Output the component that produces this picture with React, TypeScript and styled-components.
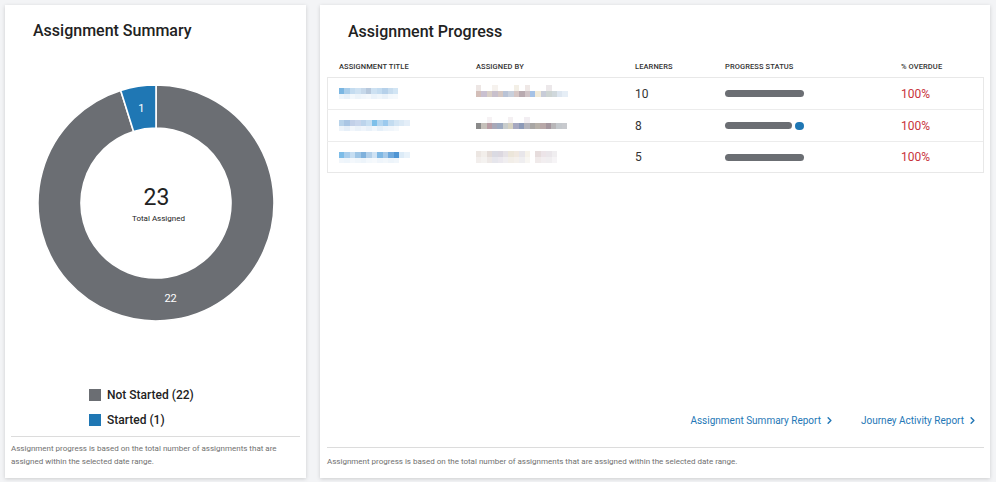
import React from "react";
import styled, { createGlobalStyle } from "styled-components";
import { ChevronRight } from "lucide-react";

const GlobalStyle = createGlobalStyle`
  html, body { margin: 0; padding: 0; background: #f3f4f6; }
  body { font-family: Roboto, "Liberation Sans", Arial, sans-serif; color: #222; }
  * { box-sizing: border-box; }
`;

const GREY = "#6b6e73";
const BLUE = "#1f77b4";
const LINK = "#2477b6";
const RED = "#c8333b";

const Page = styled.div`
  display: flex;
  gap: 14px;
  height: 482px;
  padding: 5px 6px 4px 5px;
`;

const Card = styled.section<{ $width?: number }>`
  background: #fff;
  box-shadow: 0 1px 4px rgba(0, 0, 0, 0.16);
  display: flex;
  flex-direction: column;
  ${(p) => (p.$width ? `width: ${p.$width}px; flex: none;` : "flex: 1;")}
  padding: 0 6px 0 ${(p) => (p.$width ? 6 : 7)}px;
`;

const CardTitle = styled.h2<{ $top: number; $left: number }>`
  margin: ${(p) => p.$top}px 0 0 ${(p) => p.$left}px;
  font-size: 16px;
  line-height: 20px;
  font-weight: 500;
  color: #222;
`;

const ChartWrap = styled.div`
  display: flex;
  justify-content: center;
  margin-top: 42px;
`;

const Legend = styled.ul`
  list-style: none;
  margin: auto 0 0;
  padding: 0 0 4px 78px;
`;

const LegendItem = styled.li`
  display: flex;
  align-items: center;
  gap: 6px;
  height: 25px;
  font-size: 12px;
  font-weight: 500;
  color: #222;
`;

const Swatch = styled.span<{ $color: string }>`
  width: 12px;
  height: 12px;
  background: ${(p) => p.$color};
`;

const Footnote = styled.p<{ $top: number }>`
  margin: 0;
  border-top: 1px solid #dcdcdc;
  padding: ${(p) => p.$top}px 0 10px;
  font-size: 8px;
  line-height: 13px;
  color: #707070;
`;

const COLS = "137px 159px 90px 176px 1fr";

const HeadRow = styled.div`
  display: grid;
  grid-template-columns: ${COLS};
  margin-top: 13px;
  height: 22px;
  align-items: center;
`;

const HeadCell = styled.div`
  padding-left: 12px;
  font-size: 7.5px;
  font-weight: 500;
  letter-spacing: 0.1px;
  color: #333;
  text-transform: uppercase;
`;

const TableBox = styled.div`
  border: 1px solid #e8e8e8;
`;

const Row = styled.div`
  display: grid;
  grid-template-columns: ${COLS};
  height: 31px;
  align-items: center;
  margin-left: -1px;
  & + & {
    border-top: 1px solid #ececec;
    height: 32px;
  }
  &:last-child {
    height: 31px;
  }
`;

const Cell = styled.div<{ $color?: string }>`
  padding-left: 12px;
  font-size: 12px;
  color: ${(p) => p.$color ?? "#333"};
  display: flex;
  align-items: center;
`;

const Bar = styled.div`
  display: flex;
  align-items: center;
  gap: 3px;
  width: 79px;
`;

const BarPart = styled.span<{ $color: string; $grow?: boolean; $h?: number }>`
  height: ${(p) => p.$h ?? 7}px;
  border-radius: 5px;
  background: ${(p) => p.$color};
  ${(p) => (p.$grow ? "flex: 1;" : "width: 9px; flex: none;")}
`;

const Links = styled.nav`
  margin-top: auto;
  margin-bottom: 17px;
  display: flex;
  justify-content: flex-end;
  gap: 26px;
  padding-right: 6px;
  height: 20px;
  align-items: center;
`;

const ReportLink = styled.a`
  display: flex;
  align-items: center;
  gap: 3px;
  font-size: 10px;
  color: ${LINK};
  text-decoration: none;
  cursor: pointer;
`;

/* pixelated (obscured) name blocks */
type Mosaic = { cw: number; ch: number; rows: (string | null)[][] };

const MosaicSvg = styled.svg`
  display: block;
`;

function MosaicBlock({ m }: { m: Mosaic }) {
  const cols = Math.max(...m.rows.map((r) => r.length));
  return (
    <MosaicSvg
      width={cols * m.cw}
      height={m.rows.length * m.ch}
      shapeRendering="crispEdges"
    >
      {m.rows.map((r, y) =>
        r.map((c, x) =>
          c ? (
            <rect key={`${x}-${y}`} x={x * m.cw} y={y * m.ch} width={m.cw} height={m.ch} fill={c} />
          ) : null
        )
      )}
    </MosaicSvg>
  );
}

const W = "#ffffff";

const titles: Mosaic[] = [
  {
    cw: 5.4,
    ch: 5.5,
    rows: [
      ["#7ab6e2", "#a9cdea", "#c4dcf0", "#cfe2f2", "#c6d8ea", "#b7c8dc", "#cde1f2", "#c4dcf0", "#b6d1ea", "#c8ddef", "#d2e5f4"],
      ["#eef5fb", "#e8f1f9", "#f3f8fc", "#edf4fa", "#f1f6fb", "#f4f8fc", "#ebf3fa", "#f0f6fb", "#eaf2f9", "#f3f8fc", "#f5f9fc"],
    ],
  },
  {
    cw: 5.45,
    ch: 5.5,
    rows: [
      ["#b8d3ea", "#aac6e4", "#c2d0e8", "#c9d6ec", "#bcd4ec", "#c8dff2", "#7ec0ea", "#b4d6f0", "#9ccaee", "#c3dcf0", "#d3e5f4", "#dbe9f5", "#e4eef8"],
      ["#eef4fa", "#e6eff8", "#f2f6fb", "#ebf2f9", "#f0f5fb", "#e9f1f9", "#f2f7fc", "#e6f0f9", "#eef5fb", "#f1f6fb", "#f5f9fc", W, W],
    ],
  },
  {
    cw: 5.45,
    ch: 5.5,
    rows: [
      ["#7cbce8", "#a8cdec", "#c6def2", "#9fc6e6", "#7fb1dc", "#b2cfe9", "#cfe2f3", "#7fb8e4", "#a6c9e8", "#6ea8dc", "#4f95d3", "#dcebf7", "#e8f2fa"],
      ["#f1f6fb", "#eef5fb", "#f4f8fc", "#f0f6fb", "#edf4fa", "#f3f8fc", "#f6f9fc", "#eff5fb", "#f2f7fb", "#edf4fa", "#f0f6fb", W, W],
    ],
  },
];

const people: Mosaic[] = [
  {
    cw: 5.4,
    ch: 6,
    rows: [
      ["#ede6e4", W, W, "#f6f2ee", W, W, W, "#f3efe6", W, "#efe8e6", W, W, W, "#ece8ea", W, W, W],
      ["#d3beb8", "#c9c0d0", "#d9cfc6", "#c8c0cc", "#d5c7c2", "#b9c3d6", "#c8d0dc", "#d6c6c4", "#b8aab0", "#cfc3c6", "#a6c2e6", "#f1ead8", "#c8ccd8", "#cdd4d2", "#d0d8dc", "#dde6f0", "#e6eef6"],
      [null],
    ],
  },
  {
    cw: 5.35,
    ch: 6,
    rows: [
      [W, W, "#f6f2f4", W, W, W, "#f4f0f2", W, W, "#f2eef2", W, W, W, W, W, W, W],
      ["#8a8a8a", "#c5c0ba", "#b89ca4", "#a8a8b8", "#9eaac0", "#c8cccc", "#d6d2c2", "#a6a8c0", "#8c9ab8", "#b4b4bc", "#a8a6a4", "#b6b0a8", "#b8a8a8", "#a4969e", "#b8b6b8", "#c4c8cc", "#c8cace"],
      [null],
    ],
  },
  {
    cw: 5.4,
    ch: 6,
    rows: [
      ["#ece6e2", "#f2eeea", "#e4dcd8", "#dadae2", "#dcd8e0", "#e6e2e6", "#ece6da", "#f0e8e0", "#e8e6ea", "#f6f2ea", W, "#e6dcdc", "#ece4e8", "#eae6ea", "#f0eef0", W, W],
      ["#f2eeec", "#f4f2f0", "#ede8e6", "#e6e6ec", "#ebe8ee", "#f0eef0", "#f2eee8", "#f4f0ec", "#efeef0", "#f8f6f2", W, "#f0eaea", "#f2eef0", "#f0eef0", "#f6f4f6", W, W],
    ],
  },
];

const rows = [
  { learners: 10, done: 0 },
  { learners: 8, done: 1 },
  { learners: 5, done: 0 },
];

/* donut chart: 0° is 12 o'clock, angles run clockwise */
const CX = 120;
const CY = 120;
const R_OUT = 118;
const R_IN = 75;

const pt = (r: number, a: number) => {
  const t = (a * Math.PI) / 180;
  return [CX + r * Math.sin(t), CY - r * Math.cos(t)];
};

function arcPath(a0: number, a1: number) {
  const large = a1 - a0 > 180 ? 1 : 0;
  const [x0, y0] = pt(R_OUT, a0);
  const [x1, y1] = pt(R_OUT, a1);
  const [x2, y2] = pt(R_IN, a1);
  const [x3, y3] = pt(R_IN, a0);
  return `M${x0} ${y0} A${R_OUT} ${R_OUT} 0 ${large} 1 ${x1} ${y1} L${x2} ${y2} A${R_IN} ${R_IN} 0 ${large} 0 ${x3} ${y3} Z`;
}

function Donut() {
  const split = 342.6;
  const mid = (R_OUT + R_IN) / 2;
  const [gx, gy] = pt(mid, split / 2);
  const [bx, by] = pt(mid, (split + 360) / 2);
  return (
    <svg width={240} height={240} viewBox="0 0 240 240">
      <path d={arcPath(0, split)} fill={GREY} stroke="#fff" strokeWidth={1.6} strokeLinejoin="round" />
      <path d={arcPath(split, 360)} fill={BLUE} stroke="#fff" strokeWidth={1.6} strokeLinejoin="round" />
      <text x={gx} y={gy + 4} textAnchor="middle" fontSize={11} fill="#fff" fontFamily="Roboto, sans-serif">
        22
      </text>
      <text x={bx} y={by + 4} textAnchor="middle" fontSize={11} fill="#fff" fontFamily="Roboto, sans-serif">
        1
      </text>
      <text x={120.5} y={121.5} textAnchor="middle" fontSize={23} fill="#222" fontFamily="Roboto, sans-serif">
        23
      </text>
      <text x={122.5} y={137.5} textAnchor="middle" fontSize={8} fill="#222" fontFamily="Roboto, sans-serif">
        Total Assigned
      </text>
    </svg>
  );
}

export default function App() {
  return (
    <>
      <GlobalStyle />
      <Page>
        <Card $width={301}>
          <CardTitle $top={16} $left={22}>Assignment Summary</CardTitle>
          <ChartWrap>
            <Donut />
          </ChartWrap>
          <Legend>
            <LegendItem>
              <Swatch $color={GREY} />
              Not Started (22)
            </LegendItem>
            <LegendItem>
              <Swatch $color={BLUE} />
              Started (1)
            </LegendItem>
          </Legend>
          <Footnote $top={5}>
            Assignment progress is based on the total number of assignments that are assigned within the selected date range.
          </Footnote>
        </Card>

        <Card>
          <CardTitle $top={17} $left={21}>Assignment Progress</CardTitle>
          <HeadRow>
            <HeadCell>Assignment Title</HeadCell>
            <HeadCell>Assigned By</HeadCell>
            <HeadCell>Learners</HeadCell>
            <HeadCell>Progress Status</HeadCell>
            <HeadCell>% Overdue</HeadCell>
          </HeadRow>
          <TableBox>
            {rows.map((r, i) => (
              <Row key={i}>
                <Cell>
                  <MosaicBlock m={titles[i]} />
                </Cell>
                <Cell>
                  <MosaicBlock m={people[i]} />
                </Cell>
                <Cell>{r.learners}</Cell>
                <Cell>
                  <Bar>
                    <BarPart $color={GREY} $grow />
                    {r.done > 0 && <BarPart $color={BLUE} $h={8} />}
                  </Bar>
                </Cell>
                <Cell $color={RED}>100%</Cell>
              </Row>
            ))}
          </TableBox>
          <Links>
            <ReportLink>
              Assignment Summary Report
              <ChevronRight size={11} strokeWidth={3.2} />
            </ReportLink>
            <ReportLink>
              Journey Activity Report
              <ChevronRight size={11} strokeWidth={3.2} />
            </ReportLink>
          </Links>
          <Footnote $top={7}>
            Assignment progress is based on the total number of assignments that are assigned within the selected date range.
          </Footnote>
        </Card>
      </Page>
    </>
  );
}
